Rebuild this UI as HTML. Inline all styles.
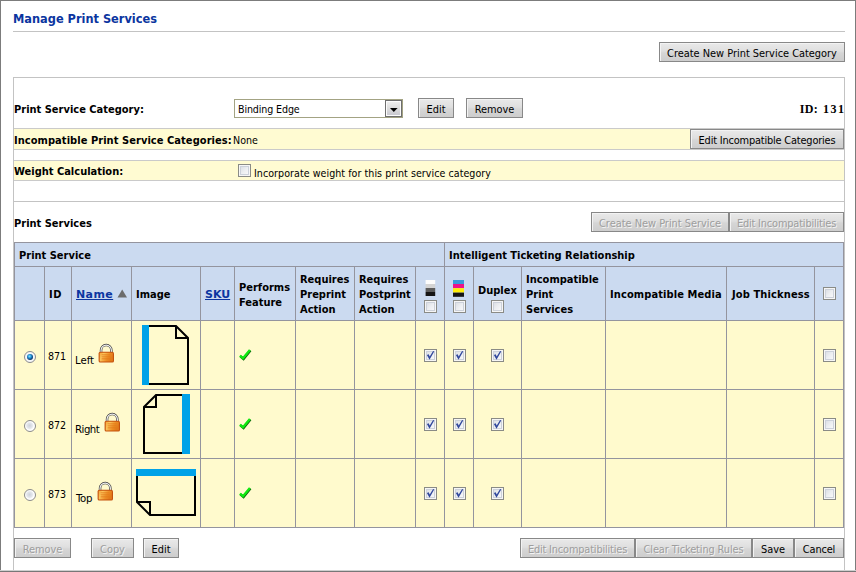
<!DOCTYPE html>
<html lang="en"><head><meta charset="utf-8"><title>Manage Print Services</title>
<style>
*{box-sizing:border-box;margin:0;padding:0}
html,body{width:856px;height:572px;overflow:hidden;background:#fff}
body{position:relative;font-family:"DejaVu Sans Condensed","DejaVu Sans","Liberation Sans",sans-serif;font-stretch:condensed;font-size:10.6px;color:#000;line-height:14px}
.a{position:absolute;white-space:nowrap}
.b{font-weight:bold;font-size:11px}
.ln{position:absolute;background:#c3c3c3}
.btn{position:absolute;height:20px;border:1px solid #888;background:linear-gradient(#e9e9e9,#dfdfdf 45%,#d6d6d6 55%,#cdcdcd);box-shadow:inset 1px 1px 0 #f3f3f3;color:#000;text-align:center;line-height:18px;padding-top:2px;font-size:10.9px;white-space:nowrap}
.btn.d{color:#9e9e9e;text-shadow:1px 1px 0 #f4f4f4}
.yl{position:absolute;left:14px;width:830px;background:#fffbd2;border-top:1px solid #cacaca;border-bottom:1px solid #cacaca}
.cb{position:absolute;width:13px;height:13px;border:1px solid #8a8b86;background:linear-gradient(135deg,#d4d8de 0%,#eceef1 50%,#fdfdfd 100%);box-shadow:inset 0 0 0 1px #f6f6f6,inset 0 0 0 2px #ccd1da}
.cb svg{position:absolute;left:0;top:0}
.rd{position:absolute;width:12px;height:12px;border-radius:50%;border:1px solid #8b8b8b;background:radial-gradient(circle at 46% 46%,#cfd3db 0%,#e3e6eb 36%,#fefefe 56%)}
.rd.on{background:#f6f7f9}
.rd.on::after{content:"";position:absolute;left:2px;top:2px;width:6px;height:6px;border-radius:50%;background:radial-gradient(circle at 42% 38%,#8fe6fc 0%,#2a9fe0 30%,#0f4f8c 58%,#08244f 82%)}
.tb{position:absolute;background:#94949e}
.hd{position:absolute;background:#cbdaf0}
.rw{position:absolute;background:#fffacd}
.lk{color:#0b35a0;text-decoration:underline;font-family:"DejaVu Sans","Liberation Sans",sans-serif;font-stretch:normal}
</style></head>
<body>
<div class="a" style="left:0;top:0;width:856px;height:1px;background:#7c7c7c"></div>
<div class="a" style="left:0;top:0;width:1px;height:572px;background:#7c7c7c"></div>
<div class="a" style="left:855px;top:0;width:1px;height:572px;background:#7c7c7c"></div>
<div class="a" style="left:0;top:570px;width:856px;height:1px;background:#cfcfcf"></div>
<div class="a" style="left:0;top:571px;width:856px;height:1px;background:#777"></div>
<div class="a" id="title" style="left:13px;top:10px;font-weight:bold;font-size:12.65px;color:#0b35a0;line-height:18px">Manage Print Services</div>
<div class="ln" style="left:13px;top:31px;width:832px;height:1px"></div>
<div class="btn" style="left:659px;top:42px;width:186px">Create New Print Service Category</div>
<div class="ln" style="left:13px;top:77px;width:832px;height:1px"></div>
<div class="ln" style="left:13px;top:77px;width:1px;height:493px"></div>
<div class="ln" style="left:844px;top:77px;width:1px;height:493px"></div>
<div class="a b" id="psc" style="left:14px;top:103px">Print Service Category:</div>
<div class="a" style="left:234px;top:99px;width:169px;height:19px;border:1px solid #a3a383;background:#fff"></div>
<div class="a" id="binding" style="left:238px;top:102px;letter-spacing:-0.12px">Binding Edge</div>
<div class="a" style="left:385px;top:100px;width:17px;height:17px;border:1px solid #6e6e6e;background:linear-gradient(#efefef,#dcdcdc 50%,#c6c6cf);box-shadow:inset 0 0 0 1px #fbfbfb"><svg width="15" height="15" style="position:absolute;left:0;top:0"><path d="M4 7h7.6l-3.8 4.1z" fill="#000"/></svg></div>
<div class="btn" style="left:418px;top:98px;width:36px">Edit</div>
<div class="btn" style="left:466px;top:98px;width:57px">Remove</div>
<div class="a" id="id131" style="right:10.5px;top:101px;font-family:'Liberation Serif',serif;font-weight:bold;font-size:12px;line-height:16px"><span style="letter-spacing:0.3px">ID:</span><span style="margin-left:5px;letter-spacing:1.5px">131</span></div>
<div class="yl" style="top:128px;height:22px"></div>
<div class="a b" id="ipsc" style="left:14px;top:134px;letter-spacing:0.055px">Incompatible Print Service Categories:</div>
<div class="a" id="none" style="left:233px;top:133px">None</div>
<div class="btn" style="left:690px;top:129px;width:154px;letter-spacing:-0.18px">Edit Incompatible Categories</div>
<div class="yl" style="top:160px;height:21px"></div>
<div class="a b" id="wc" style="left:14px;top:165px">Weight Calculation:</div>
<div class="cb" style="left:238px;top:164px"></div>
<div class="a" id="incorp" style="left:254px;top:166px;letter-spacing:0.05px">Incorporate weight for this print service category</div>
<div class="ln" style="left:14px;top:201px;width:830px;height:1px"></div>
<div class="a b" id="ps" style="left:14px;top:217px">Print Services</div>
<div class="btn d" style="left:591px;top:212px;width:138px">Create New Print Service</div>
<div class="btn d" style="left:729px;top:212px;width:115px;letter-spacing:-0.17px">Edit Incompatibilities</div>
<div class="tb" style="left:14px;top:242px;width:830px;height:286px"></div>
<div class="hd" style="left:15px;top:243px;width:429px;height:23px"></div>
<div class="hd" style="left:445px;top:243px;width:398px;height:23px"></div>
<div class="a b" id="g1" style="left:19px;top:249px">Print Service</div>
<div class="a b" id="g2" style="left:449px;top:249px">Intelligent Ticketing Relationship</div>
<div class="hd" style="left:15px;top:267px;width:29px;height:53px"></div>
<div class="rw" style="left:15px;top:321px;width:29px;height:68px"></div>
<div class="rw" style="left:15px;top:390px;width:29px;height:68px"></div>
<div class="rw" style="left:15px;top:459px;width:29px;height:68px"></div>
<div class="hd" style="left:45px;top:267px;width:26px;height:53px"></div>
<div class="rw" style="left:45px;top:321px;width:26px;height:68px"></div>
<div class="rw" style="left:45px;top:390px;width:26px;height:68px"></div>
<div class="rw" style="left:45px;top:459px;width:26px;height:68px"></div>
<div class="hd" style="left:72px;top:267px;width:59px;height:53px"></div>
<div class="rw" style="left:72px;top:321px;width:59px;height:68px"></div>
<div class="rw" style="left:72px;top:390px;width:59px;height:68px"></div>
<div class="rw" style="left:72px;top:459px;width:59px;height:68px"></div>
<div class="hd" style="left:132px;top:267px;width:68px;height:53px"></div>
<div class="rw" style="left:132px;top:321px;width:68px;height:68px"></div>
<div class="rw" style="left:132px;top:390px;width:68px;height:68px"></div>
<div class="rw" style="left:132px;top:459px;width:68px;height:68px"></div>
<div class="hd" style="left:201px;top:267px;width:33px;height:53px"></div>
<div class="rw" style="left:201px;top:321px;width:33px;height:68px"></div>
<div class="rw" style="left:201px;top:390px;width:33px;height:68px"></div>
<div class="rw" style="left:201px;top:459px;width:33px;height:68px"></div>
<div class="hd" style="left:235px;top:267px;width:60px;height:53px"></div>
<div class="rw" style="left:235px;top:321px;width:60px;height:68px"></div>
<div class="rw" style="left:235px;top:390px;width:60px;height:68px"></div>
<div class="rw" style="left:235px;top:459px;width:60px;height:68px"></div>
<div class="hd" style="left:296px;top:267px;width:58px;height:53px"></div>
<div class="rw" style="left:296px;top:321px;width:58px;height:68px"></div>
<div class="rw" style="left:296px;top:390px;width:58px;height:68px"></div>
<div class="rw" style="left:296px;top:459px;width:58px;height:68px"></div>
<div class="hd" style="left:355px;top:267px;width:60px;height:53px"></div>
<div class="rw" style="left:355px;top:321px;width:60px;height:68px"></div>
<div class="rw" style="left:355px;top:390px;width:60px;height:68px"></div>
<div class="rw" style="left:355px;top:459px;width:60px;height:68px"></div>
<div class="hd" style="left:416px;top:267px;width:28px;height:53px"></div>
<div class="rw" style="left:416px;top:321px;width:28px;height:68px"></div>
<div class="rw" style="left:416px;top:390px;width:28px;height:68px"></div>
<div class="rw" style="left:416px;top:459px;width:28px;height:68px"></div>
<div class="hd" style="left:445px;top:267px;width:28px;height:53px"></div>
<div class="rw" style="left:445px;top:321px;width:28px;height:68px"></div>
<div class="rw" style="left:445px;top:390px;width:28px;height:68px"></div>
<div class="rw" style="left:445px;top:459px;width:28px;height:68px"></div>
<div class="hd" style="left:474px;top:267px;width:47px;height:53px"></div>
<div class="rw" style="left:474px;top:321px;width:47px;height:68px"></div>
<div class="rw" style="left:474px;top:390px;width:47px;height:68px"></div>
<div class="rw" style="left:474px;top:459px;width:47px;height:68px"></div>
<div class="hd" style="left:522px;top:267px;width:83px;height:53px"></div>
<div class="rw" style="left:522px;top:321px;width:83px;height:68px"></div>
<div class="rw" style="left:522px;top:390px;width:83px;height:68px"></div>
<div class="rw" style="left:522px;top:459px;width:83px;height:68px"></div>
<div class="hd" style="left:606px;top:267px;width:120px;height:53px"></div>
<div class="rw" style="left:606px;top:321px;width:120px;height:68px"></div>
<div class="rw" style="left:606px;top:390px;width:120px;height:68px"></div>
<div class="rw" style="left:606px;top:459px;width:120px;height:68px"></div>
<div class="hd" style="left:727px;top:267px;width:87px;height:53px"></div>
<div class="rw" style="left:727px;top:321px;width:87px;height:68px"></div>
<div class="rw" style="left:727px;top:390px;width:87px;height:68px"></div>
<div class="rw" style="left:727px;top:459px;width:87px;height:68px"></div>
<div class="hd" style="left:815px;top:267px;width:28px;height:53px"></div>
<div class="rw" style="left:815px;top:321px;width:28px;height:68px"></div>
<div class="rw" style="left:815px;top:390px;width:28px;height:68px"></div>
<div class="rw" style="left:815px;top:459px;width:28px;height:68px"></div>
<div class="a b" id="hid" style="left:49px;top:287px;line-height:15px;letter-spacing:0.6px">ID</div>
<div class="a b" id="hname" style="left:76px;top:287px;line-height:15px;"><span class="lk" style="letter-spacing:0.4px">Name</span></div>
<svg class="a" style="left:117px;top:289px" width="11" height="9"><path d="M0.5 8.5L5.2 0.6L10 8.5z" fill="#6c6c6c"/></svg>
<div class="a b" id="himg" style="left:136px;top:287px;line-height:15px;">Image</div>
<div class="a b" id="hsku" style="left:205px;top:287px;line-height:15px;"><span class="lk">SKU</span></div>
<div class="a b" id="hperf" style="left:239px;top:280px;line-height:15px;">Performs<br>Feature</div>
<div class="a b" id="hpre" style="left:300px;top:272px;line-height:15px;">Requires<br>Preprint<br>Action</div>
<div class="a b" id="hpost" style="left:359px;top:272px;line-height:15px;">Requires<br>Postprint<br>Action</div>
<div class="a b" id="hdup" style="left:478px;top:283px;line-height:15px;">Duplex</div>
<div class="a b" id="hips" style="left:526px;top:272px;line-height:15px;">Incompatible<br>Print<br>Services</div>
<div class="a b" id="him" style="left:610px;top:287px;line-height:15px;letter-spacing:0.1px">Incompatible Media</div>
<div class="a b" id="hjt" style="left:732px;top:287px;line-height:15px;letter-spacing:0.12px">Job Thickness</div>
<svg class="a" style="left:425px;top:280px" width="11" height="17"><rect x="0.6" width="9.6" height="4" fill="#fdfdfd"/><rect x="0.6" y="4" width="9.6" height="4" fill="#d4d4d4"/><rect x="0.6" y="8" width="9.6" height="4" fill="#5c5c5c"/><rect x="0.6" y="12" width="9.6" height="4" fill="#151515"/></svg>
<svg class="a" style="left:453px;top:280px" width="11" height="17"><rect width="11" height="4" fill="#3a9ad9"/><rect y="4" width="11" height="4.2" fill="#ee1289"/><rect y="8.2" width="11" height="4.4" fill="#ffee0a"/><rect y="12.6" width="11" height="4.2" fill="#151515"/></svg>
<div class="cb" style="left:424px;top:300px"></div>
<div class="cb" style="left:453px;top:300px"></div>
<div class="cb" style="left:491px;top:300px"></div>
<div class="cb" style="left:823px;top:287px"></div>
<div class="rd on" style="left:24px;top:351px"></div>
<div class="a" id="id0" style="left:48px;top:349px">871</div>
<div class="a" id="nm0" style="left:75px;top:354px;font-size:11.3px;letter-spacing:0px">Left</div>
<svg class="a" style="left:98px;top:343px" width="17" height="20" viewBox="0 0 17 20"><defs><linearGradient id="lg0" x1="0" y1="0" x2="1" y2="0.35"><stop offset="0" stop-color="#f4a43a"/><stop offset="0.3" stop-color="#fbc45c"/><stop offset="0.7" stop-color="#ee8f26"/><stop offset="1" stop-color="#e27a1a"/></linearGradient></defs><path d="M3.05 9.6V7.2a5.15 5.15 0 0 1 10.3 0V9.6" fill="none" stroke="#3c3c3c" stroke-width="2.5"/><path d="M3.05 9.6V7.2a5.15 5.15 0 0 1 10.3 0V9.6" fill="none" stroke="#f4f4f4" stroke-width="1.2"/><rect x="0.6" y="8.8" width="15.4" height="10.8" rx="1.7" fill="#c5520e"/><rect x="1.7" y="9.7" width="13.2" height="8.9" rx="0.9" fill="url(#lg0)"/><rect x="3.6" y="11.3" width="9" height="1" fill="#e07a18" opacity=".75"/><rect x="3.6" y="13.3" width="9" height="1" fill="#e07a18" opacity=".75"/><rect x="3.6" y="15.3" width="9" height="1" fill="#e07a18" opacity=".75"/></svg>
<svg class="a" style="left:237px;top:348px" width="16" height="14" viewBox="0 0 16 14"><path d="M2.9 7.7L6 10.3L12.9 1.9" fill="none" stroke="#0b5f0b" stroke-width="2.5" transform="translate(0.5,0.6)"/><path d="M2.9 7.7L6 10.3L12.9 1.9" fill="none" stroke="#10e810" stroke-width="2.4"/></svg>
<div class="cb" style="left:424px;top:349px"><svg width="11" height="11" viewBox="0 0 11 11"><path d="M1.9 5.0L3.7 4.3L4.7 6.6L8.1 1.0L9.2 1.6L4.5 9.7Z" fill="#30479c"/></svg></div>
<div class="cb" style="left:453px;top:349px"><svg width="11" height="11" viewBox="0 0 11 11"><path d="M1.9 5.0L3.7 4.3L4.7 6.6L8.1 1.0L9.2 1.6L4.5 9.7Z" fill="#30479c"/></svg></div>
<div class="cb" style="left:491px;top:349px"><svg width="11" height="11" viewBox="0 0 11 11"><path d="M1.9 5.0L3.7 4.3L4.7 6.6L8.1 1.0L9.2 1.6L4.5 9.7Z" fill="#30479c"/></svg></div>
<div class="cb" style="left:823px;top:349px"></div>
<div class="rd" style="left:24px;top:420px"></div>
<div class="a" id="id1" style="left:48px;top:418px">872</div>
<div class="a" id="nm1" style="left:75px;top:423px;font-size:11.3px;letter-spacing:-0.5px">Right</div>
<svg class="a" style="left:104px;top:412px" width="17" height="20" viewBox="0 0 17 20"><defs><linearGradient id="lg1" x1="0" y1="0" x2="1" y2="0.35"><stop offset="0" stop-color="#f4a43a"/><stop offset="0.3" stop-color="#fbc45c"/><stop offset="0.7" stop-color="#ee8f26"/><stop offset="1" stop-color="#e27a1a"/></linearGradient></defs><path d="M3.05 9.6V7.2a5.15 5.15 0 0 1 10.3 0V9.6" fill="none" stroke="#3c3c3c" stroke-width="2.5"/><path d="M3.05 9.6V7.2a5.15 5.15 0 0 1 10.3 0V9.6" fill="none" stroke="#f4f4f4" stroke-width="1.2"/><rect x="0.6" y="8.8" width="15.4" height="10.8" rx="1.7" fill="#c5520e"/><rect x="1.7" y="9.7" width="13.2" height="8.9" rx="0.9" fill="url(#lg1)"/><rect x="3.6" y="11.3" width="9" height="1" fill="#e07a18" opacity=".75"/><rect x="3.6" y="13.3" width="9" height="1" fill="#e07a18" opacity=".75"/><rect x="3.6" y="15.3" width="9" height="1" fill="#e07a18" opacity=".75"/></svg>
<svg class="a" style="left:237px;top:417px" width="16" height="14" viewBox="0 0 16 14"><path d="M2.9 7.7L6 10.3L12.9 1.9" fill="none" stroke="#0b5f0b" stroke-width="2.5" transform="translate(0.5,0.6)"/><path d="M2.9 7.7L6 10.3L12.9 1.9" fill="none" stroke="#10e810" stroke-width="2.4"/></svg>
<div class="cb" style="left:424px;top:418px"><svg width="11" height="11" viewBox="0 0 11 11"><path d="M1.9 5.0L3.7 4.3L4.7 6.6L8.1 1.0L9.2 1.6L4.5 9.7Z" fill="#30479c"/></svg></div>
<div class="cb" style="left:453px;top:418px"><svg width="11" height="11" viewBox="0 0 11 11"><path d="M1.9 5.0L3.7 4.3L4.7 6.6L8.1 1.0L9.2 1.6L4.5 9.7Z" fill="#30479c"/></svg></div>
<div class="cb" style="left:491px;top:418px"><svg width="11" height="11" viewBox="0 0 11 11"><path d="M1.9 5.0L3.7 4.3L4.7 6.6L8.1 1.0L9.2 1.6L4.5 9.7Z" fill="#30479c"/></svg></div>
<div class="cb" style="left:823px;top:418px"></div>
<div class="rd" style="left:24px;top:489px"></div>
<div class="a" id="id2" style="left:48px;top:487px">873</div>
<div class="a" id="nm2" style="left:76px;top:492px;font-size:11.3px;letter-spacing:-0.3px">Top</div>
<svg class="a" style="left:97px;top:481px" width="17" height="20" viewBox="0 0 17 20"><defs><linearGradient id="lg2" x1="0" y1="0" x2="1" y2="0.35"><stop offset="0" stop-color="#f4a43a"/><stop offset="0.3" stop-color="#fbc45c"/><stop offset="0.7" stop-color="#ee8f26"/><stop offset="1" stop-color="#e27a1a"/></linearGradient></defs><path d="M3.05 9.6V7.2a5.15 5.15 0 0 1 10.3 0V9.6" fill="none" stroke="#3c3c3c" stroke-width="2.5"/><path d="M3.05 9.6V7.2a5.15 5.15 0 0 1 10.3 0V9.6" fill="none" stroke="#f4f4f4" stroke-width="1.2"/><rect x="0.6" y="8.8" width="15.4" height="10.8" rx="1.7" fill="#c5520e"/><rect x="1.7" y="9.7" width="13.2" height="8.9" rx="0.9" fill="url(#lg2)"/><rect x="3.6" y="11.3" width="9" height="1" fill="#e07a18" opacity=".75"/><rect x="3.6" y="13.3" width="9" height="1" fill="#e07a18" opacity=".75"/><rect x="3.6" y="15.3" width="9" height="1" fill="#e07a18" opacity=".75"/></svg>
<svg class="a" style="left:237px;top:486px" width="16" height="14" viewBox="0 0 16 14"><path d="M2.9 7.7L6 10.3L12.9 1.9" fill="none" stroke="#0b5f0b" stroke-width="2.5" transform="translate(0.5,0.6)"/><path d="M2.9 7.7L6 10.3L12.9 1.9" fill="none" stroke="#10e810" stroke-width="2.4"/></svg>
<div class="cb" style="left:424px;top:487px"><svg width="11" height="11" viewBox="0 0 11 11"><path d="M1.9 5.0L3.7 4.3L4.7 6.6L8.1 1.0L9.2 1.6L4.5 9.7Z" fill="#30479c"/></svg></div>
<div class="cb" style="left:453px;top:487px"><svg width="11" height="11" viewBox="0 0 11 11"><path d="M1.9 5.0L3.7 4.3L4.7 6.6L8.1 1.0L9.2 1.6L4.5 9.7Z" fill="#30479c"/></svg></div>
<div class="cb" style="left:491px;top:487px"><svg width="11" height="11" viewBox="0 0 11 11"><path d="M1.9 5.0L3.7 4.3L4.7 6.6L8.1 1.0L9.2 1.6L4.5 9.7Z" fill="#30479c"/></svg></div>
<div class="cb" style="left:823px;top:487px"></div>
<svg class="a" style="left:142px;top:325px" width="47" height="60"><rect x="0" y="0" width="7" height="60" fill="#00a2e8"/><path d="M7 1H34L46 13V59H7" fill="none" stroke="#000" stroke-width="2"/><path d="M34 1V13H46" fill="none" stroke="#000" stroke-width="2"/></svg>
<svg class="a" style="left:143px;top:394px" width="47" height="60"><rect x="39" y="0" width="8" height="60" fill="#00a2e8"/><path d="M39 1H13L1 13V59H39" fill="none" stroke="#000" stroke-width="2"/><path d="M13 1V13H1" fill="none" stroke="#000" stroke-width="2"/></svg>
<svg class="a" style="left:136px;top:469px" width="60" height="47"><rect x="0" y="0" width="60" height="7" fill="#00a2e8"/><path d="M1 7V33L14 46H59V7" fill="none" stroke="#000" stroke-width="2"/><path d="M1 33H14V46" fill="none" stroke="#000" stroke-width="2"/></svg>
<div class="btn d" style="left:14px;top:538px;width:57px">Remove</div>
<div class="btn d" style="left:91px;top:538px;width:43px">Copy</div>
<div class="btn" style="left:143px;top:538px;width:36px">Edit</div>
<div class="btn d" style="left:520px;top:538px;width:115px;letter-spacing:-0.17px">Edit Incompatibilities</div>
<div class="btn d" style="left:635px;top:538px;width:117px;letter-spacing:-0.12px">Clear Ticketing Rules</div>
<div class="btn" style="left:752px;top:538px;width:42px">Save</div>
<div class="btn" style="left:794px;top:538px;width:50px;letter-spacing:-0.15px">Cancel</div>
</body></html>
